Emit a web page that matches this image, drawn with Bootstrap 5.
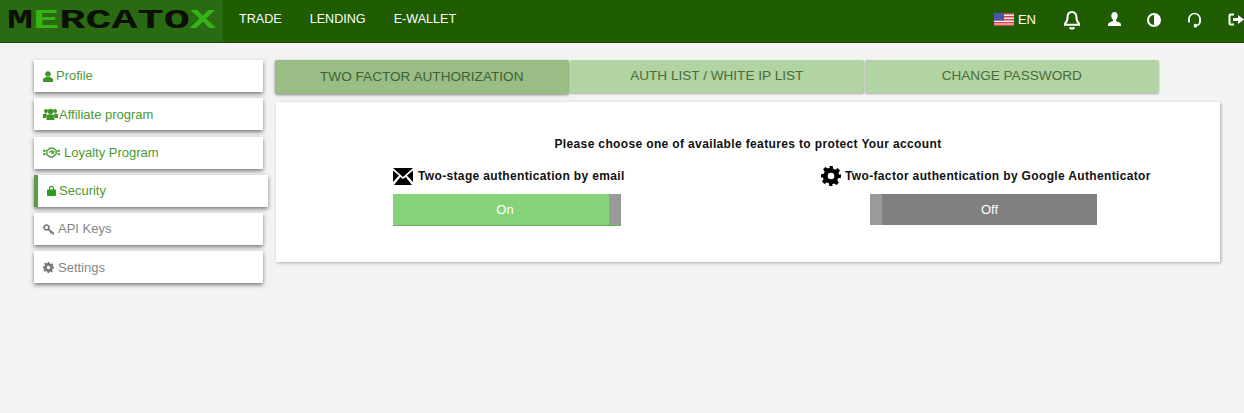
<!DOCTYPE html>
<html lang="en">
<head>
<meta charset="utf-8">
<title>Mercatox security</title>
<link href="https://cdn.jsdelivr.net/npm/bootstrap@5.3.0/dist/css/bootstrap.min.css" rel="stylesheet">
<style>
html,body{height:413px;overflow:hidden}
body{background:#f3f3f3;font-family:"Liberation Sans",Arial,sans-serif;font-size:14px}
.topbar{height:43px;background:#1f5c02;border-bottom:1px solid #184a02;padding:0}
.brand-box{width:223px;height:42px;background:#2a6a12;padding:4px 0 0 7px}
.brand-box svg{display:block}
.brand-txt{font-family:"Liberation Mono",monospace;font-weight:700;font-size:28px}
.top-link{color:#fff;font-size:12.6px;text-decoration:none;margin-right:28px}
.top-links{padding-left:16px;margin-top:-3px}
.top-right{margin-left:auto;margin-top:-3px}
.top-ico{display:block}
.lang{color:#fff;font-size:13px;margin-left:4px}
.ml-bell{margin-left:27px}
.ml-user{margin-left:26px}
.ml-half{margin-left:25px}
.ml-head{margin-left:26px}
.ml-exit{margin-left:26px}
.page-wrap{padding:17px 24px 0 34px;gap:12px}
.side-col{width:229px;flex:none}
.side-item{height:32px;width:229px;background:#fff;box-shadow:0 2px 4px rgba(0,0,0,.5);margin-bottom:6.3px;padding-left:9px;color:#4d9a33;font-size:13px;text-decoration:none;gap:3px}
.side-item.is-active{width:234px;border-left:4px solid #5c9a4a;padding-left:9px}
.side-item.is-muted{color:#858585}
.gap-tight{gap:1px}
.gap-loose{gap:4px}
.main-col{flex:1;min-width:0}
.tab-row{height:34px;gap:1.5px;margin-bottom:8px}
.tab-item{width:293.5px;height:33px;background:#b2d3a2;color:#4a6b3b;font-size:13.6px;border-radius:2px;box-shadow:0 1px 2px rgba(0,0,0,.3);text-decoration:none}
.tab-item.is-on{height:34px;background:#9abd86;color:#3f6330;box-shadow:0 1px 3px rgba(0,0,0,.45)}
.panel-box{margin-left:1px;width:944px;height:160px;background:#fff;box-shadow:1px 1px 3px rgba(0,0,0,.3);padding-top:35px}
.panel-title{font-weight:700;font-size:12px;letter-spacing:.36px;color:#111;text-align:center;line-height:14px;margin-bottom:14px}
.opt-left{width:463px;padding-left:117px}
.opt-right{width:481px;padding-left:82px}
.opt-head{font-weight:700;font-size:12px;letter-spacing:.35px;color:#111;height:22px;gap:5px;white-space:nowrap}
.opt-right .opt-head{gap:4px}
.tog{height:32px;width:228px;margin-top:7px;color:#fff;font-size:13px}
.tog-on{background:#86d27a;border-bottom:1px solid #6cb661}
.tog-on .tog-label{padding-left:8px}
.tog-off{background:#808080;height:31px;margin-left:49px;width:227px}
.tog-label{flex:1;text-align:center}
.tog-knob{width:12px;height:100%;background:#9a9a9a}
</style>
</head>
<body>
<nav class="topbar d-flex align-items-center">
  <div class="brand-box flex-shrink-0">
    <svg width="210" height="34" viewBox="0 0 210 34" role="img" aria-label="MERCATOX">
      <text class="brand-txt" x="0" y="24" textLength="209" lengthAdjust="spacingAndGlyphs"><tspan fill="#0b0f05">M</tspan><tspan fill="#35b414">E</tspan><tspan fill="#0b0f05">RCATO</tspan><tspan fill="#35b414">X</tspan></text>
    </svg>
  </div>
  <div class="top-links d-flex align-items-center">
    <a class="top-link" href="#">TRADE</a>
    <a class="top-link" href="#">LENDING</a>
    <a class="top-link" href="#">E-WALLET</a>
  </div>
  <div class="top-right d-flex align-items-center">
    <svg class="top-ico" width="20" height="13" viewBox="0 0 20 13"><rect width="20" height="13" fill="#eee"/><g fill="#d5414a"><rect width="20" height="1.5"/><rect y="3" width="20" height="1.5"/><rect y="6" width="20" height="1.5"/><rect y="9" width="20" height="1.5"/><rect y="11.5" width="20" height="1.5"/></g><rect width="10" height="7.5" fill="#4a55a8"/></svg>
    <span class="lang">EN</span>
    <svg class="top-ico ml-bell" width="18" height="20" viewBox="0 0 18 20" fill="none" stroke="#fff" stroke-width="2"><path d="M9 2c-3 0-4.4 2.400-4.400 5 0 3.400-.8 5-2.600 6.800v1h14v-1c-1.800-1.800-2.600-3.400-2.600-6.800C13.400 4.400 12 2 9 2z"/><path d="M6.500 17.700c1.500 1 3.500 1 5 0" stroke-width="2.200"/></svg>
    <svg class="top-ico ml-user" width="15" height="15" viewBox="0 0 15 15" fill="#fff"><path d="M7.500 0C5.300 0 4.200 1.700 4.300 4c.1 1.700.8 3 1.700 3.700v1.200C3.500 9.800 1 10.500 1 12.500V14h13v-1.500c0-2-2.500-2.700-5-3.600V7.700c.9-.7 1.600-2 1.700-3.700C10.800 1.700 9.700 0 7.500 0z"/></svg>
    <svg class="top-ico ml-half" width="14" height="14" viewBox="0 0 14 14"><circle cx="7" cy="7" r="6" fill="none" stroke="#fff" stroke-width="2"/><path d="M7 1a6 6 0 0 1 0 12z" fill="#fff"/></svg>
    <svg class="top-ico ml-head" width="15" height="17" viewBox="0 0 15 17" fill="none" stroke="#fff" stroke-width="1.5"><path d="M2 8A5.500 5.500 0 0 1 13 8"/><path d="M13 11c-.3 2-1.500 3.300-3.600 3.600"/><circle cx="8.500" cy="14.700" r="1.100" fill="#fff"/><rect x="1" y="7.500" width="2" height="4" rx=".8" fill="#fff" stroke="none"/><rect x="12" y="7.500" width="2" height="4" rx=".8" fill="#fff" stroke="none"/></svg>
    <svg class="top-ico ml-exit" width="16" height="13" viewBox="0 0 16 13"><path d="M6 1.500H2.500a1 1 0 0 0-1 1v8a1 1 0 0 0 1 1H6" fill="none" stroke="#fff" stroke-width="2"/><path d="M5 5h5V2l6 4.500L10 11V8H5z" fill="#fff"/></svg>
  </div>
</nav>
<div class="page-wrap d-flex align-items-start">
  <div class="side-col">
    <a class="side-item d-flex align-items-center" href="#"><svg width="10" height="11" viewBox="0 0 10 11" fill="#3f9426"><circle cx="5" cy="3" r="2.800"/><path d="M0 11V8.500C0 7 2 6.500 3.500 6h3C8 6.500 10 7 10 8.500V11z"/></svg>Profile</a>
    <a class="side-item gap-tight d-flex align-items-center" href="#"><svg width="15" height="12" viewBox="0 0 15 12" fill="#3f9426"><circle cx="3" cy="3" r="2"/><circle cx="12" cy="3" r="2"/><circle cx="7.500" cy="3.500" r="2.700"/><path d="M0 9V7c0-1 1-1.500 3-1.500l1 .5L3 10H0zM15 9V7c0-1-1-1.500-3-1.500L11 6l1 4h3z"/><path d="M3.500 12V8.500c0-1.500 1.500-2.300 4-2.300s4 .8 4 2.300V12z"/></svg>Affiliate program</a>
    <a class="side-item gap-loose d-flex align-items-center" href="#"><svg width="17" height="11" viewBox="0 0 17 11" fill="none" stroke="#55a040" stroke-width="1.500"><path d="M3.500 4 7 1.300h3.500L13.500 4l-.5 3-3.500 3H7L4 7.500z"/><path d="M6 5.500 8.500 3.800l2.500 1-1 1.500-1.800-.5"/><path d="M0 3.500l2.500.8M0 7.500l2.500-.8M17 3.500l-2.500.8M17 7.500l-2.500-.8" stroke-width="2"/></svg>Loyalty Program</a>
    <a class="side-item is-active d-flex align-items-center" href="#"><svg width="9" height="11" viewBox="0 0 9 11" fill="#2f9a20"><path d="M2 5V3.200a2.500 2.500 0 0 1 5 0V5h-1.200V3.200a1.300 1.300 0 0 0-2.600 0V5z"/><rect y="4.500" width="9" height="6.500" rx="1"/></svg>Security</a>
    <a class="side-item is-muted d-flex align-items-center" href="#"><svg width="12" height="11" viewBox="0 0 12 11" fill="none" stroke="#777" stroke-width="1.700"><circle cx="3.500" cy="3.500" r="2.500"/><path d="M5.500 5.500 10.500 9.500M8.500 8l-1 1.500M10.500 9.500 9.800 10.500"/></svg>API Keys</a>
    <a class="side-item gap-loose is-muted d-flex align-items-center" href="#"><svg width="11" height="11" viewBox="0 0 24 24" fill="#777"><path fill-rule="evenodd" d="M10 0h4l.7 3.400 2.300 1 3-1.900 2.800 2.800-1.900 3 1 2.300L24 10v4l-3.400.7-1 2.300 1.900 3-2.800 2.800-3-1.900-2.300 1L14 24h-4l-.7-3.400-2.300-1-3 1.900-2.800-2.800 1.900-3-1-2.300L0 14v-4l3.400-.7 1-2.300-1.900-3 2.800-2.800 3 1.900 2.300-1zM12 8a4 4 0 1 0 0 8 4 4 0 0 0 0-8z"/></svg>Settings</a>
  </div>
  <div class="main-col">
    <div class="tab-row d-flex">
      <a class="tab-item is-on d-flex align-items-center justify-content-center" href="#">TWO FACTOR AUTHORIZATION</a>
      <a class="tab-item d-flex align-items-center justify-content-center" href="#">AUTH LIST / WHITE IP LIST</a>
      <a class="tab-item d-flex align-items-center justify-content-center" href="#">CHANGE PASSWORD</a>
    </div>
    <div class="panel-box">
      <div class="panel-title">Please choose one of available features to protect Your account</div>
      <div class="d-flex">
        <div class="opt-left">
          <div class="opt-head d-flex align-items-center"><svg width="20" height="17" viewBox="0 0 20 17" fill="#000"><path d="M0 0h20L10 9z"/><path d="M0 2.500V14l6-6.500zM20 2.500V14l-6-6.500z"/><path d="M1 17l6.300-8L10 11l2.700-2 6.300 8z"/></svg>Two-stage authentication by email</div>
          <div class="tog tog-on d-flex align-items-center"><span class="tog-label">On</span><span class="tog-knob"></span></div>
        </div>
        <div class="opt-right">
          <div class="opt-head d-flex align-items-center"><svg width="20" height="20" viewBox="0 0 24 24" fill="#000"><path fill-rule="evenodd" d="M10 0h4l.7 3.400 2.300 1 3-1.900 2.800 2.800-1.900 3 1 2.300L24 10v4l-3.400.7-1 2.300 1.900 3-2.800 2.800-3-1.900-2.300 1L14 24h-4l-.7-3.400-2.300-1-3 1.900-2.800-2.800 1.900-3-1-2.300L0 14v-4l3.400-.7 1-2.300-1.900-3 2.800-2.800 3 1.900 2.300-1zM12 8a4 4 0 1 0 0 8 4 4 0 0 0 0-8z"/></svg>Two-factor authentication by Google Authenticator</div>
          <div class="tog tog-off d-flex align-items-center"><span class="tog-knob"></span><span class="tog-label">Off</span></div>
        </div>
      </div>
    </div>
  </div>
</div>
</body>
</html>
